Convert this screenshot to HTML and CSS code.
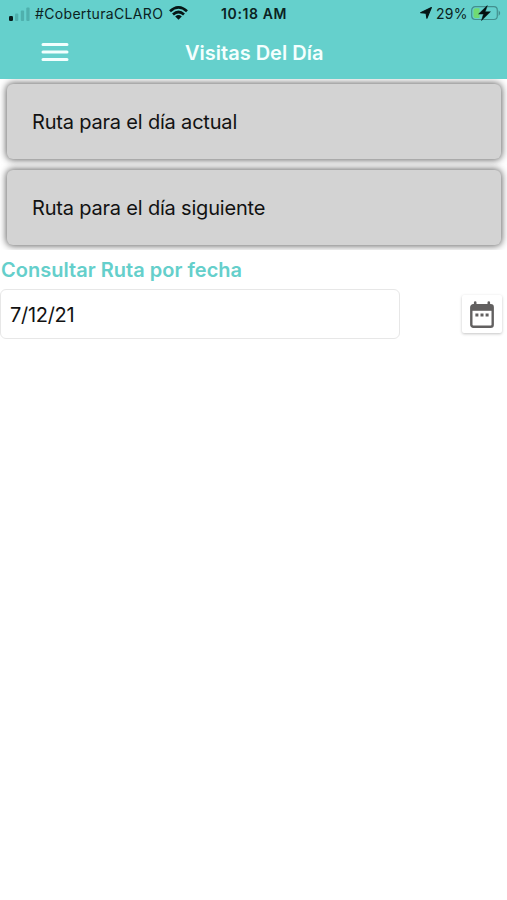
FILE: index.html
```html
<!DOCTYPE html>
<html lang="es">
<head>
<meta charset="utf-8">
<title>Visitas Del Día</title>
<link rel="stylesheet" href="styles.css">
</head>
<body>
<header class="header">
  <div class="status">
    <div class="carrier">
      <svg width="22" height="14" viewBox="0 0 22 14"><rect x="0" y="9" width="4" height="5" rx="1.200" fill="#071b1b"/><g fill="#4fb0ad"><rect x="6" y="6.500" width="3.300" height="7.500" rx="1"/><rect x="11.800" y="3.500" width="3.300" height="10.500" rx="1"/><rect x="17.300" y="0.500" width="3.300" height="13.500" rx="1"/></g></svg>
      <span class="carrier-name">#CoberturaCLARO</span>
      <svg class="wifi" width="19" height="14" viewBox="0 0 19 14" fill="none" stroke="#061616" stroke-width="2.700"><path d="M1 5.200Q9.500-2.400 18 5.200M4 8.500Q9.500 3.500 15 8.500"/><path d="M6.200 10.500Q9.500 7.700 12.800 10.500L9.500 13.800Z" fill="#061616" stroke="none"/></svg>
    </div>
    <span class="time">10:18 AM</span>
    <div class="power">
      <svg width="12" height="12" viewBox="0 0 12 12"><path d="M11.400.6 6.900 11.300 6.100 6.300.6 5.700Z" fill="#061616" stroke="#061616" stroke-width="1.100" stroke-linejoin="round"/></svg>
      <span class="percent">29%</span>
      <svg class="battery" width="30" height="16" viewBox="0 0 30 16"><rect x=".7" y="1.700" width="25.600" height="12.800" rx="3.500" fill="none" stroke="#438f8e" stroke-width="1.200"/><path d="M4.500 3.200h4v9.800h-4a2 2 0 0 1-2-2V5.200a2 2 0 0 1 2-2Z" fill="#70da73"/><path d="M27.600 5.300q3.200 2.800 0 5.600Z" fill="#438f8e"/><path d="M16.300 0.600 7.600 9h4.900l-2 6.600L19.400 6.800h-5.200Z" fill="#041010" stroke="#041010" stroke-width=".5" stroke-linejoin="round"/></svg>
    </div>
  </div>
  <div class="nav">
    <svg class="menu" width="28" height="20" viewBox="0 0 28 20" stroke="#f2fffe" stroke-width="3" stroke-linecap="round"><path d="M2 2.500h24M2 10h24M2 17.400h24"/></svg>
    <h1 class="title">Visitas Del Día</h1>
  </div>
</header>
<section class="routes">
  <div class="card"><span>Ruta para el día actual</span></div>
  <div class="card"><span>Ruta para el día siguiente</span></div>
</section>
<main class="query">
  <h2 class="label">Consultar Ruta por fecha</h2>
  <div class="row">
    <div class="field"><span>7/12/21</span></div>
    <div class="calendar">
      <svg width="24" height="27" viewBox="0 0 24 27"><path d="M5.200 1.500v4M18.800 1.500v4" stroke="#626060" stroke-width="2.600" stroke-linecap="round"/><rect x="1.300" y="4.300" width="21.400" height="21.400" rx="2" fill="#fff" stroke="#626060" stroke-width="2.400"/><path d="M1.300 4.500h21.400v5.300H1.300Z" fill="#626060"/><path d="M5.400 12.600h3v3h-3ZM10.500 12.600h3v3h-3ZM15.600 12.600h3v3h-3Z" fill="#626060"/></svg>
    </div>
  </div>
</main>
</body>
</html>
```

FILE: styles.css
```css
* { box-sizing: border-box; }
body { margin: 0; background: #fff; color: #121212; font-family: Inter, "Liberation Sans", sans-serif; }
svg { display: block; flex: none; }
span, h1, h2 { white-space: nowrap; }
.header { height: 79px; background: #65d0cc; }
.status { height: 27px; padding: 0 6px 0 9px; display: grid; grid-template-columns: 212px 1fr auto; align-items: center; color: #0b2222; font-size: 14px; line-height: 20px; }
.carrier { display: flex; align-items: center; }
.carrier-name { width: 129px; margin-left: 4px; letter-spacing: .33px; }
.wifi { margin-left: 5px; margin-top: -2px; }
.time { font-weight: 600; letter-spacing: .62px; }
.power { display: flex; align-items: center; }
.power > svg { margin-top: -1px; }
.percent { margin-left: 4px; width: 32px; letter-spacing: .3px; }
.battery { margin-left: 3px; }
.nav { height: 52px; display: grid; grid-template-columns: 144px 1fr; padding-left: 41px; align-items: center; }
.menu { margin-top: -2px; }
.title { margin: -1px 0 0; color: #f4fffe; font-size: 20px; line-height: 26px; font-weight: 600; letter-spacing: 0; }
.routes { height: 171px; padding: 5px 6px 5px 7px; display: flex; flex-direction: column; gap: 11px; overflow: hidden; }
.card { height: 75px; flex: none; display: flex; align-items: center; padding-left: 25px; background: #d3d3d3; border-radius: 6px; box-shadow: 0 0 7px 1px #666; font-size: 20px; line-height: 26px; letter-spacing: -.19px; }
.label { margin: 0; height: 39px; padding: 7px 0 0 1px; color: #65cfcb; font-size: 20px; line-height: 26px; font-weight: 600; letter-spacing: .02px; }
.row { display: flex; justify-content: space-between; padding-right: 5px; }
.field { width: 400px; height: 50px; padding: 1px 0 0 9px; display: flex; align-items: center; border: 1px solid #e7e7e7; border-radius: 6px; font-size: 20px; letter-spacing: -.3px; }
.calendar { width: 40px; height: 38px; margin-top: 6px; display: flex; align-items: center; justify-content: center; border-radius: 2px; box-shadow: 0 1px 3px #c4c4c4; }
```
